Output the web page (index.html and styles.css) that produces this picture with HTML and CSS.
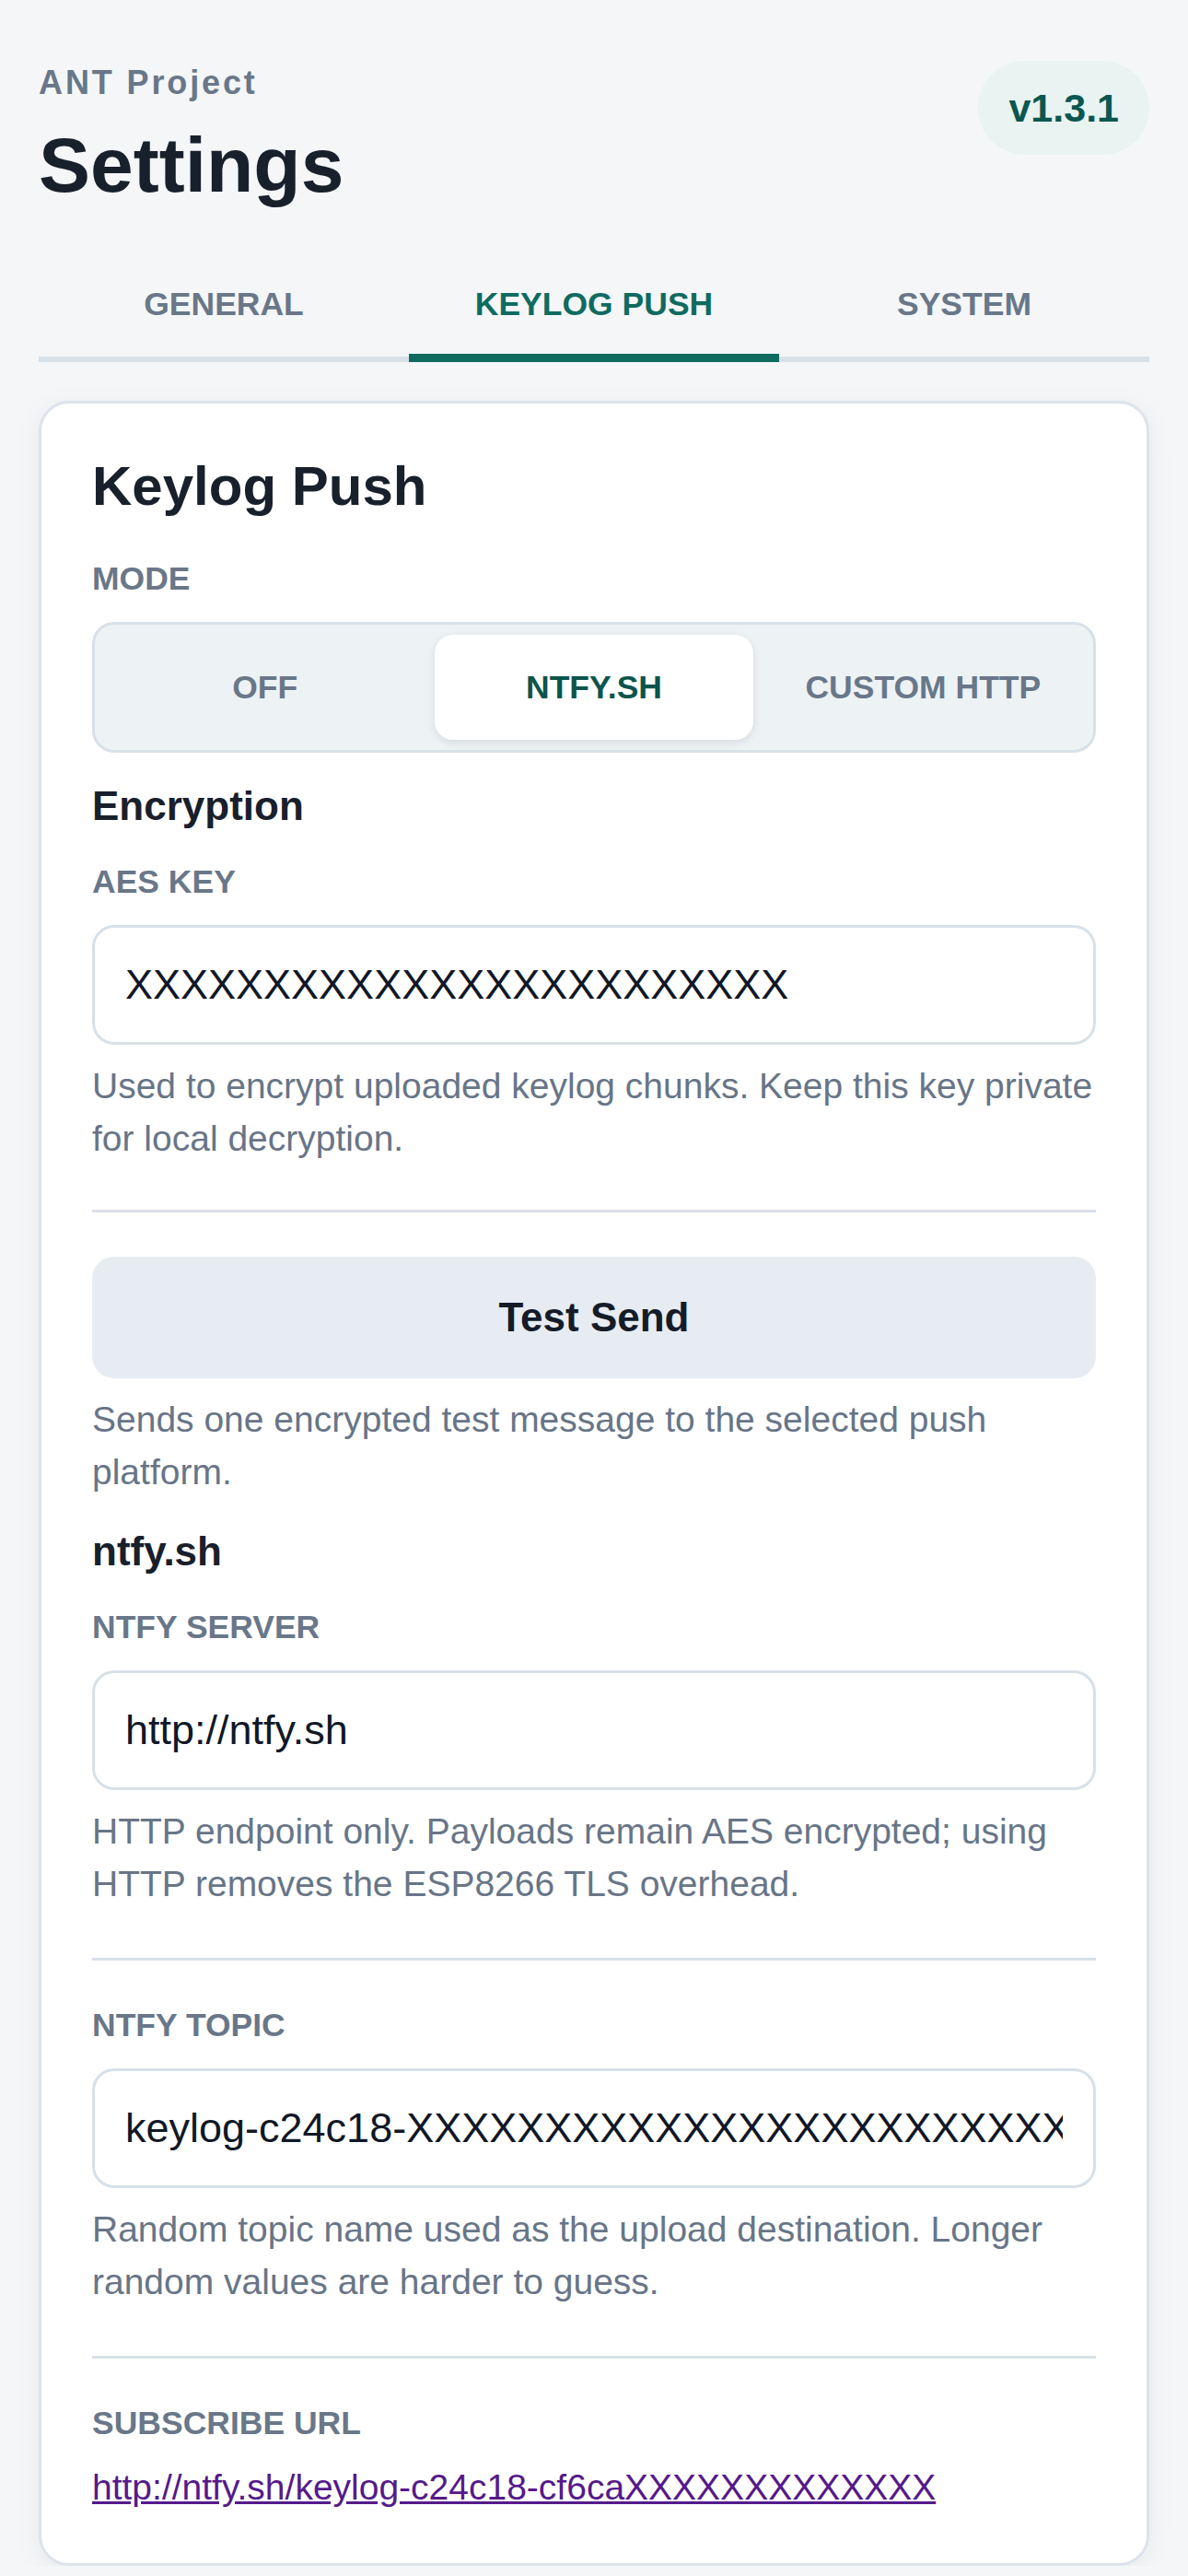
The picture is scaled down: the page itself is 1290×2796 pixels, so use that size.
FILE: index.html
```html
<!DOCTYPE html>
<html lang="en">
<head>
  <meta charset="UTF-8" />
  <meta name="viewport" content="width=device-width, initial-scale=1.0"/>
  <title>Settings | ANT Project</title>

  <link rel="stylesheet" href="styles.css">
</head>
<body>

  <div class="page">

    <!-- Page Header -->
    <header class="top">
      <div>
        <p class="eyebrow">ANT Project</p>
        <h1>Settings</h1>
      </div>
      <span class="version">v1.3.1</span>
    </header>

    <!-- Tabs -->
    <nav class="tabs">
      <a href="#" class="tab">GENERAL</a>
      <a href="#" class="tab active">KEYLOG PUSH</a>
      <a href="#" class="tab">SYSTEM</a>
    </nav>

    <!-- Keylog Push Card -->
    <section class="card">
      <h2>Keylog Push</h2>

      <div class="label label-first">MODE</div>
      <div class="segmented">
        <button class="seg">OFF</button>
        <button class="seg active">NTFY.SH</button>
        <button class="seg">CUSTOM HTTP</button>
      </div>

      <h3>Encryption</h3>
      <div class="label">AES KEY</div>
      <input class="field" type="text" value="XXXXXXXXXXXXXXXXXXXXXXXX">
      <p class="help">Used to encrypt uploaded keylog chunks. Keep this key private for local decryption.</p>

      <hr class="divider divider-tight">

      <button class="btn">Test Send</button>
      <p class="help">Sends one encrypted test message to the selected push platform.</p>

      <h3>ntfy.sh</h3>
      <div class="label">NTFY SERVER</div>
      <input class="field" type="text" value="http://ntfy.sh">
      <p class="help">HTTP endpoint only. Payloads remain AES encrypted; using HTTP removes the ESP8266 TLS overhead.</p>

      <hr class="divider">

      <div class="label label-after-line">NTFY TOPIC</div>
      <input class="field" type="text" value="keylog-c24c18-XXXXXXXXXXXXXXXXXXXXXXXXXXXXXXXX">
      <p class="help">Random topic name used as the upload destination. Longer random values are harder to guess.</p>

      <hr class="divider">

      <div class="label label-after-line">SUBSCRIBE URL</div>
      <div class="link-row">
        <a href="#" class="subscribe-link">http://ntfy.sh/keylog-c24c18-cf6caXXXXXXXXXXXXX</a>
      </div>
    </section>

  </div>

</body>
</html>
```

FILE: styles.css
```css
:root {
  --bg-color: #f4f6f8;
  --text-color: #18202c;
  --muted: #697789;
  --line: #d8e0e8;
  --teal: #0f6b60;
  --teal-dark: #0b554d;
}

* {
  box-sizing: border-box;
}

body {
  font-family: "Liberation Sans", Arial, sans-serif;
  background-color: var(--bg-color);
  color: var(--text-color);
  margin: 0;
  padding: 0;
}

.page {
  padding: 66px 42px 0;
}

/* Header */
.top {
  display: flex;
  justify-content: space-between;
  align-items: flex-start;
}

.eyebrow {
  margin: 2px 0 0;
  font-size: 36px;
  line-height: 44px;
  font-weight: 700;
  letter-spacing: 0.08em;
  color: var(--muted);
}

h1 {
  margin: 19px 0 0;
  font-size: 84px;
  line-height: 96px;
  font-weight: 700;
}

.version {
  padding: 30px 33px;
  font-size: 43px;
  line-height: 42px;
  font-weight: 700;
  color: #0b5750;
  background: #e9f3f1;
  border-radius: 51px;
}

/* Tabs */
.tabs {
  display: flex;
  margin-top: 53px;
  border-bottom: 6px solid var(--line);
}

.tab {
  flex: 1;
  padding: 28px 0 32px;
  margin-bottom: -6px;
  border-bottom: 9px solid transparent;
  text-align: center;
  font-size: 35.5px;
  line-height: 44px;
  font-weight: 700;
  color: var(--muted);
  text-decoration: none;
}

.tab.active {
  color: var(--teal);
  border-bottom-color: var(--teal);
}

/* Card */
.card {
  margin-top: 42px;
  background: white;
  border: 3px solid #dde3ea;
  border-radius: 33px;
  padding: 54px 55px 60px;
  box-shadow: 0 6px 30px rgba(15, 23, 42, 0.06);
}

h2 {
  margin: 0;
  font-size: 60px;
  line-height: 72px;
  font-weight: 700;
}

h3 {
  margin: 32px 0 0;
  font-size: 44px;
  line-height: 52px;
  font-weight: 700;
}

.label {
  margin: 34px 0 25px;
  font-size: 35.5px;
  line-height: 44px;
  font-weight: 700;
  color: var(--muted);
}

.label-first {
  margin-top: 42px;
}

.label-after-line {
  margin-top: 48px;
}

/* Mode switch */
.segmented {
  display: flex;
  gap: 12px;
  padding: 11px 12px;
  background: #edf2f5;
  border: 3px solid var(--line);
  border-radius: 24px;
}

.seg {
  flex: 1;
  padding: 35px 0;
  border: none;
  border-radius: 20px;
  background: transparent;
  font-family: inherit;
  font-size: 35.5px;
  line-height: 44px;
  font-weight: 700;
  color: var(--muted);
}

.seg.active {
  background: white;
  color: var(--teal-dark);
  box-shadow: 0 3px 10px rgba(15, 23, 42, 0.1);
}

/* Inputs */
.field {
  display: block;
  width: 100%;
  height: 130px;
  padding: 0 33px;
  border: 3px solid var(--line);
  border-radius: 24px;
  background: white;
  font-family: inherit;
  font-size: 45px;
  color: #111827;
  outline: none;
}

.help {
  margin: 16px 0 0;
  font-size: 39px;
  line-height: 57px;
  color: #687587;
}

.divider {
  margin: 52px 0 0;
  border: none;
  border-top: 3px solid var(--line);
}

.divider-tight {
  margin-top: 49px;
}

.btn {
  display: block;
  width: 100%;
  margin-top: 48px;
  padding: 40px 0;
  border: none;
  border-radius: 24px;
  background: #e7ecf3;
  font-family: inherit;
  font-size: 44px;
  line-height: 52px;
  font-weight: 700;
  color: #151c28;
}

.link-row {
  margin-top: 7px;
  font-size: 39px;
  line-height: 45px;
}

.subscribe-link {
  color: #551a8b;
}
```
